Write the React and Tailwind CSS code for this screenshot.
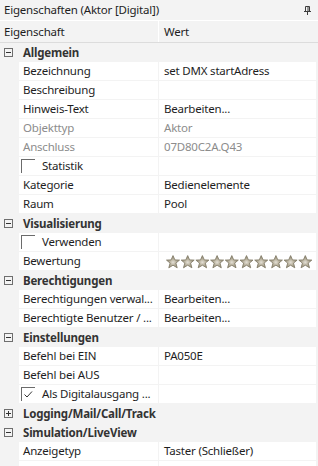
import React from 'react';

const font = { fontFamily: '"Segoe UI", "Noto Sans", "Open Sans", sans-serif' };

const sections = [
  {
    title: 'Allgemein',
    open: true,
    rows: [
      { name: 'Bezeichnung', value: 'set DMX startAdress' },
      { name: 'Beschreibung', value: '' },
      { name: 'Hinweis-Text', value: 'Bearbeiten...' },
      { name: 'Objekttyp', value: 'Aktor', dim: true },
      { name: 'Anschluss', value: '07D80C2A.Q43', dim: true },
      { name: 'Statistik', check: false },
      { name: 'Kategorie', value: 'Bedienelemente' },
      { name: 'Raum', value: 'Pool' },
    ],
  },
  {
    title: 'Visualisierung',
    open: true,
    rows: [
      { name: 'Verwenden', check: false },
      { name: 'Bewertung', stars: true },
    ],
  },
  {
    title: 'Berechtigungen',
    open: true,
    rows: [
      { name: 'Berechtigungen verwal...', value: 'Bearbeiten...' },
      { name: 'Berechtigte Benutzer / ...', value: 'Bearbeiten...' },
    ],
  },
  {
    title: 'Einstellungen',
    open: true,
    rows: [
      { name: 'Befehl bei EIN', value: 'PA050E' },
      { name: 'Befehl bei AUS', value: '' },
      { name: 'Als Digitalausgang ...', check: true },
    ],
  },
  { title: 'Logging/Mail/Call/Track', open: false, rows: [] },
  {
    title: 'Simulation/LiveView',
    open: true,
    rows: [
      { name: 'Anzeigetyp', value: 'Taster (Schließer)' },
      { name: '', value: '' },
    ],
  },
];

const Toggle = ({ open }) => (
  <svg width="9" height="9" viewBox="0 0 9 9" className="shrink-0">
    <rect x="0.5" y="0.5" width="8" height="8" fill="none" stroke="#6e6e6e" />
    <line x1="2" y1="4.5" x2="7" y2="4.5" stroke="#333" />
    {!open && <line x1="4.5" y1="2" x2="4.5" y2="7" stroke="#333" />}
  </svg>
);

const CheckBox = ({ checked }) => (
  <div className="relative w-[14px] h-[14px] shrink-0 border-l border-t border-[#6b6b6b]">
    {checked && (
      <svg width="13" height="13" viewBox="0 0 13 13" className="absolute left-0 top-0">
        <path d="M2.5 6.5 L5 9 L10 3.5" fill="none" stroke="#333" strokeWidth="1" />
      </svg>
    )}
  </div>
);

const Stars = () => (
  <svg width="148" height="14" viewBox="0 0 148 14">
    <defs>
      <radialGradient id="sg" cx="50%" cy="55%" r="55%">
        <stop offset="0%" stopColor="#e4e0d6" />
        <stop offset="40%" stopColor="#bdb6a3" />
        <stop offset="100%" stopColor="#8a836f" />
      </radialGradient>
    </defs>
    {Array.from({ length: 10 }).map((_, i) => (
      <path
        key={i}
        transform={`translate(${i * 14.7},0)`}
        d="M7 0.6 L8.9 4.9 L13.5 5.1 L9.9 8.1 L11.2 12.8 L7 10.2 L2.8 12.8 L4.1 8.1 L0.5 5.1 L5.1 4.9 Z"
        fill="url(#sg)"
        stroke="#857e6a"
        strokeWidth="0.9"
      />
    ))}
  </svg>
);

const Row = ({ row }) => (
  <div className="flex h-[19px] pl-[19px] pr-[2px] pb-px gap-px">
    <div className="w-[139px] bg-white flex items-center overflow-hidden whitespace-nowrap">
      {row.check !== undefined ? (
        <div className="flex items-center pl-[2px] gap-[7px]">
          <CheckBox checked={row.check} />
          <span className="text-[#1e1e1e]">{row.name}</span>
        </div>
      ) : (
        <span className={`pl-[4px] ${row.dim ? 'text-[#8c8c8c]' : 'text-[#1e1e1e]'}`}>{row.name}</span>
      )}
    </div>
    <div className="flex-1 bg-white flex items-center overflow-hidden whitespace-nowrap">
      {row.stars ? (
        <div className="pl-[7px] pt-px flex items-center">
          <Stars />
        </div>
      ) : (
        <span className={`pl-[5px] ${row.dim ? 'text-[#8c8c8c]' : 'text-[#1e1e1e]'}`}>{row.value}</span>
      )}
    </div>
  </div>
);

export default function App() {
  return (
    <div
      className="w-[318px] h-[466px] overflow-hidden bg-[#f3f3f3] text-[11.5px] tracking-[-0.2px] leading-none"
      style={font}
    >
      <div className="h-[20px] flex items-center justify-between pl-[4px] pr-[7px] text-[#1e1e1e]">
        <span>Eigenschaften (Aktor [Digital])</span>
        <svg width="7" height="9" viewBox="0 0 7 9">
          <path d="M1.5 0.5 H5.5 V5.5 H1.5 Z M4 1 V5" fill="none" stroke="#3c3c3c" />
          <path d="M0 5.5 H7 M3.5 5.5 V9" stroke="#3c3c3c" />
        </svg>
      </div>
      <div className="h-px bg-white" />
      <div className="h-[22px] flex border-b border-[#dcdcdc] text-[#1e1e1e]">
        <div className="w-[159px] flex items-center pl-[4px] border-r border-white">Eigenschaft</div>
        <div className="flex-1 flex items-center pl-[5px]">Wert</div>
      </div>
      {sections.map((s) => (
        <div key={s.title}>
          <div className="h-[19px] flex items-center pl-[4px] gap-[10px]">
            <Toggle open={s.open} />
            <span className="font-bold text-[#333333]">{s.title}</span>
          </div>
          {s.open && s.rows.map((r, i) => <Row key={i} row={r} />)}
        </div>
      ))}
    </div>
  );
}
